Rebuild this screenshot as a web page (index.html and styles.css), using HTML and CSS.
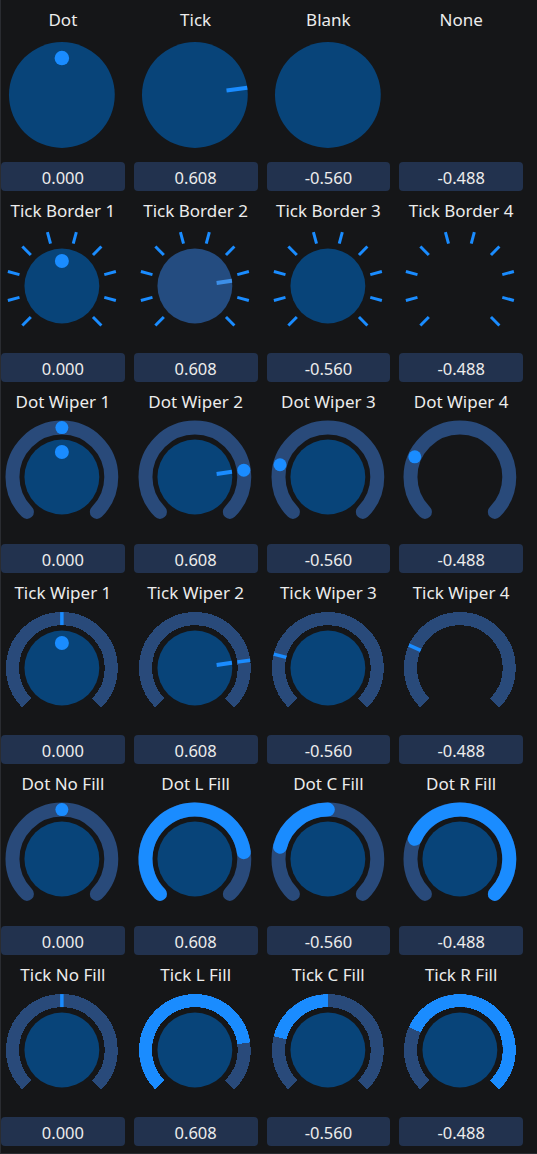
FILE: index.html
```html
<!DOCTYPE html>
<html lang="en">
<head>
<meta charset="utf-8">
<title>Knobs</title>
<link rel="stylesheet" href="styles.css">
</head>
<body>
<svg class="defs" width="0" height="0" aria-hidden="true">
  <defs>
    <g id="ticks">
      <line x1="11.39" y1="-42.50" x2="14.49" y2="-54.09"/>
      <line x1="-11.39" y1="-42.50" x2="-14.49" y2="-54.09"/>
      <line x1="31.11" y1="-31.11" x2="39.60" y2="-39.60"/>
      <line x1="-31.11" y1="-31.11" x2="-39.60" y2="-39.60"/>
      <line x1="42.50" y1="-11.39" x2="54.09" y2="-14.49"/>
      <line x1="-42.50" y1="-11.39" x2="-54.09" y2="-14.49"/>
      <line x1="42.50" y1="11.39" x2="54.09" y2="14.49"/>
      <line x1="-42.50" y1="11.39" x2="-54.09" y2="14.49"/>
      <line x1="31.11" y1="31.11" x2="39.60" y2="39.60"/>
      <line x1="-31.11" y1="31.11" x2="-39.60" y2="39.60"/>
    </g>
    <path id="arc" d="M -35.002 35.002 A 49.5 49.5 0 1 1 35.002 35.002"/>
  </defs>
</svg>

<main class="grid">
  <!-- Row 1 -->
  <div class="cell">
    <div class="title">Dot</div>
    <svg class="dial" viewBox="-61 -57 124 114"><circle class="knob" r="53"/><circle class="ind" cy="-37" r="7.3"/></svg>
    <div class="value">0.000</div>
  </div>
  <div class="cell">
    <div class="title">Tick</div>
    <svg class="dial" viewBox="-61 -57 124 114"><circle class="knob" r="53"/><line class="tick" x1="31.70" y1="-4.41" x2="52.49" y2="-7.30"/></svg>
    <div class="value">0.608</div>
  </div>
  <div class="cell">
    <div class="title">Blank</div>
    <svg class="dial" viewBox="-61 -57 124 114"><circle class="knob" r="53"/></svg>
    <div class="value">-0.560</div>
  </div>
  <div class="cell">
    <div class="title">None</div>
    <svg class="dial" viewBox="-61 -57 124 114"></svg>
    <div class="value">-0.488</div>
  </div>

  <!-- Row 2 -->
  <div class="cell">
    <div class="title">Tick Border 1</div>
    <svg class="dial" viewBox="-61 -57 124 114"><use class="ticks" href="#ticks"/><circle class="knob" r="37.5"/><circle class="ind" cy="-25" r="7"/></svg>
    <div class="value">0.000</div>
  </div>
  <div class="cell">
    <div class="title">Tick Border 2</div>
    <svg class="dial" viewBox="-61 -57 124 114"><use class="ticks" href="#ticks"/><circle class="knob hover" r="37.5"/><line class="tick light" x1="21.79" y1="-3.03" x2="37.14" y2="-5.17"/></svg>
    <div class="value">0.608</div>
  </div>
  <div class="cell">
    <div class="title">Tick Border 3</div>
    <svg class="dial" viewBox="-61 -57 124 114"><use class="ticks" href="#ticks"/><circle class="knob" r="37.5"/></svg>
    <div class="value">-0.560</div>
  </div>
  <div class="cell">
    <div class="title">Tick Border 4</div>
    <svg class="dial" viewBox="-61 -57 124 114"><use class="ticks" href="#ticks"/></svg>
    <div class="value">-0.488</div>
  </div>

  <!-- Row 3 -->
  <div class="cell">
    <div class="title">Dot Wiper 1</div>
    <svg class="dial" viewBox="-61 -57 124 114"><use class="track-r" href="#arc"/><circle class="knob" r="37.5"/><circle class="ind" cy="-25" r="7"/><circle class="ind" cy="-49.5" r="6.5"/></svg>
    <div class="value">0.000</div>
  </div>
  <div class="cell">
    <div class="title">Dot Wiper 2</div>
    <svg class="dial" viewBox="-61 -57 124 114"><use class="track-r" href="#arc"/><circle class="knob" r="37.5"/><line class="tick" x1="21.79" y1="-3.03" x2="37.14" y2="-5.17"/><circle class="ind" cx="49.03" cy="-6.82" r="6.5"/></svg>
    <div class="value">0.608</div>
  </div>
  <div class="cell">
    <div class="title">Dot Wiper 3</div>
    <svg class="dial" viewBox="-61 -57 124 114"><use class="track-r" href="#arc"/><circle class="knob" r="37.5"/><circle class="ind" cx="-47.95" cy="-12.31" r="6.5"/></svg>
    <div class="value">-0.560</div>
  </div>
  <div class="cell">
    <div class="title">Dot Wiper 4</div>
    <svg class="dial" viewBox="-61 -57 124 114"><use class="track-r" href="#arc"/><circle class="ind" cx="-45.18" cy="-20.23" r="6.5"/></svg>
    <div class="value">-0.488</div>
  </div>

  <!-- Row 4 -->
  <div class="cell">
    <div class="title">Tick Wiper 1</div>
    <svg class="dial" viewBox="-61 -57 124 114"><use class="track-b" href="#arc"/><circle class="knob" r="37.5"/><circle class="ind" cy="-25" r="7"/><line class="wtick" x1="0" y1="-43" x2="0" y2="-56"/></svg>
    <div class="value">0.000</div>
  </div>
  <div class="cell">
    <div class="title">Tick Wiper 2</div>
    <svg class="dial" viewBox="-61 -57 124 114"><use class="track-b" href="#arc"/><circle class="knob" r="37.5"/><line class="tick" x1="21.79" y1="-3.03" x2="37.14" y2="-5.17"/><line class="wtick" x1="42.59" y1="-5.93" x2="55.47" y2="-7.72"/></svg>
    <div class="value">0.608</div>
  </div>
  <div class="cell">
    <div class="title">Tick Wiper 3</div>
    <svg class="dial" viewBox="-61 -57 124 114"><use class="track-b" href="#arc"/><circle class="knob" r="37.5"/><line class="wtick" x1="-41.65" y1="-10.69" x2="-54.24" y2="-13.93"/></svg>
    <div class="value">-0.560</div>
  </div>
  <div class="cell">
    <div class="title">Tick Wiper 4</div>
    <svg class="dial" viewBox="-61 -57 124 114"><use class="track-b" href="#arc"/><line class="wtick" x1="-39.25" y1="-17.57" x2="-51.11" y2="-22.88"/></svg>
    <div class="value">-0.488</div>
  </div>

  <!-- Row 5 -->
  <div class="cell">
    <div class="title">Dot No Fill</div>
    <svg class="dial" viewBox="-61 -57 124 114"><use class="track-r" href="#arc"/><circle class="knob" r="37.5"/><circle class="ind" cy="-49.5" r="6.5"/></svg>
    <div class="value">0.000</div>
  </div>
  <div class="cell">
    <div class="title">Dot L Fill</div>
    <svg class="dial" viewBox="-61 -57 124 114"><use class="track-r" href="#arc"/><path class="fill-r" d="M -35.002 35.002 A 49.5 49.5 0 1 1 49.03 -6.82"/><circle class="knob" r="37.5"/></svg>
    <div class="value">0.608</div>
  </div>
  <div class="cell">
    <div class="title">Dot C Fill</div>
    <svg class="dial" viewBox="-61 -57 124 114"><use class="track-r" href="#arc"/><path class="fill-r" d="M -47.95 -12.31 A 49.5 49.5 0 0 1 0 -49.5"/><circle class="knob" r="37.5"/></svg>
    <div class="value">-0.560</div>
  </div>
  <div class="cell">
    <div class="title">Dot R Fill</div>
    <svg class="dial" viewBox="-61 -57 124 114"><use class="track-r" href="#arc"/><path class="fill-r" d="M -45.18 -20.23 A 49.5 49.5 0 1 1 35.002 35.002"/><circle class="knob" r="37.5"/></svg>
    <div class="value">-0.488</div>
  </div>

  <!-- Row 6 -->
  <div class="cell">
    <div class="title">Tick No Fill</div>
    <svg class="dial" viewBox="-61 -57 124 114"><use class="track-b" href="#arc"/><circle class="knob" r="37.5"/><line class="wtick" x1="0" y1="-43" x2="0" y2="-56"/></svg>
    <div class="value">0.000</div>
  </div>
  <div class="cell">
    <div class="title">Tick L Fill</div>
    <svg class="dial" viewBox="-61 -57 124 114"><use class="track-b" href="#arc"/><path class="fill-b" d="M -35.002 35.002 A 49.5 49.5 0 1 1 49.03 -6.82"/><circle class="knob" r="37.5"/></svg>
    <div class="value">0.608</div>
  </div>
  <div class="cell">
    <div class="title">Tick C Fill</div>
    <svg class="dial" viewBox="-61 -57 124 114"><use class="track-b" href="#arc"/><path class="fill-b" d="M -47.95 -12.31 A 49.5 49.5 0 0 1 0 -49.5"/><circle class="knob" r="37.5"/></svg>
    <div class="value">-0.560</div>
  </div>
  <div class="cell">
    <div class="title">Tick R Fill</div>
    <svg class="dial" viewBox="-61 -57 124 114"><use class="track-b" href="#arc"/><path class="fill-b" d="M -45.18 -20.23 A 49.5 49.5 0 1 1 35.002 35.002"/><circle class="knob" r="37.5"/></svg>
    <div class="value">-0.488</div>
  </div>
</main>
</body>
</html>
```

FILE: styles.css
```css
html, body {
  margin: 0;
  padding: 0;
  background: #151618;
}

body {
  width: 537px;
  height: 1153px;
  overflow: hidden;
  border-left: 1px solid #2a2c31;
  border-bottom: 1px solid #2a2c31;
  box-sizing: content-box;
  font-family: "Noto Sans", "Open Sans", sans-serif;
  color: #ececec;
}

.defs {
  position: absolute;
  width: 0;
  height: 0;
}

.grid {
  width: 522px;
  display: grid;
  grid-template-columns: repeat(4, 1fr);
  column-gap: 9px;
}

.cell {
  display: flex;
  flex-direction: column;
  height: 191px;
}

.title {
  height: 38px;
  line-height: 39px;
  font-size: 17px;
  text-align: center;
  white-space: nowrap;
}

.dial {
  display: block;
  width: 100%;
  height: 114px;
}

.value {
  margin-top: 10px;
  height: 29px;
  line-height: 32px;
  border-radius: 4px;
  background: #22324e;
  font-size: 16.5px;
  text-align: center;
}

.knob { fill: #084479; }
.knob.hover { fill: #244c80; }
.ind { fill: #1a8cff; }

.tick {
  stroke: #1a8cff;
  stroke-width: 4;
}
.tick.light { stroke: #3d8fe8; }

.ticks {
  stroke: #1a8cff;
  stroke-width: 3;
}

.wtick {
  stroke: #1a8cff;
  stroke-width: 3.5;
}

.track-r, .fill-r {
  fill: none;
  stroke-width: 14;
  stroke-linecap: round;
}
.track-r { stroke: #294a7a; }
.fill-r { stroke: #1a8cff; }

.track-b, .fill-b {
  fill: none;
  stroke-width: 13;
  stroke-linecap: butt;
  shape-rendering: crispEdges;
}
.track-b { stroke: #294a7a; }
.fill-b { stroke: #1a8cff; }
```
